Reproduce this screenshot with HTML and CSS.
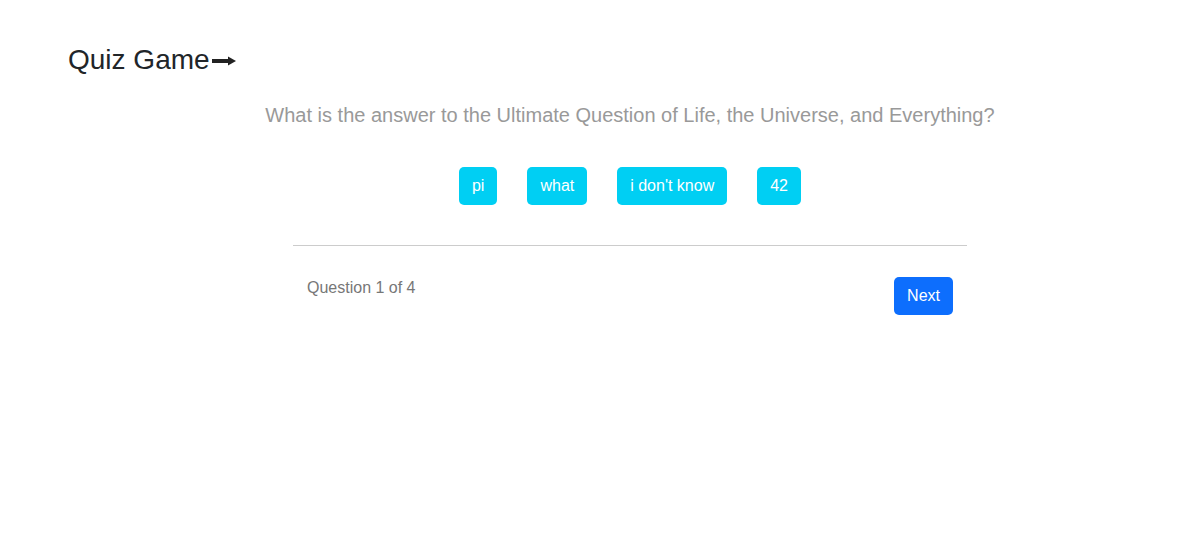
FILE: index.html
```html
<!DOCTYPE html>
<html lang="en">
<head>
<meta charset="utf-8">
<title>Quiz Game</title>
<link rel="stylesheet" href="styles.css">
</head>
<body>
<div class="page">
  <h1 class="title">Quiz Game<svg class="arrow" width="24" height="10" viewBox="0 0 24 10"><rect x="0" y="3" width="17" height="4" fill="#222"/><path d="M16 0.5 L24 5 L16 9.5 Z" fill="#222"/></svg></h1>
  <main class="quiz">
    <p class="question">What is the answer to the Ultimate Question of Life, the Universe, and Everything?</p>
    <div class="answers">
      <button class="answer">pi</button>
      <button class="answer">what</button>
      <button class="answer">i don't know</button>
      <button class="answer">42</button>
    </div>
    <div class="footer">
      <span class="progress">Question 1 of 4</span>
      <button class="next">Next</button>
    </div>
  </main>
</div>
</body>
</html>
```

FILE: styles.css
```css
html, body {
  margin: 0;
  padding: 0;
  background: #fff;
}
body {
  font-family: "Liberation Sans", Arial, sans-serif;
  color: #212529;
}
.page {
  padding: 44px 0 0 68px;
}
.title {
  margin: 0;
  font-size: 28px;
  font-weight: 400;
  line-height: 32px;
  display: flex;
  align-items: center;
  color: #212529;
}
.arrow {
  margin-left: 2px;
  margin-top: 1px;
}
.quiz {
  display: flex;
  flex-direction: column;
  align-items: center;
}
.question {
  margin: 27px 0 0;
  font-size: 20px;
  line-height: 24px;
  color: #999;
}
.answers {
  display: flex;
  gap: 30px;
  margin-top: 40px;
}
.answer {
  font-family: inherit;
  font-size: 16px;
  height: 38px;
  padding: 0 13px;
  border: none;
  border-radius: 5px;
  background: #00cff3;
  color: #fff;
}
.footer {
  width: 674px;
  box-sizing: border-box;
  margin-top: 40px;
  border-top: 1px solid #ccc;
  padding: 31px 14px 0;
  display: flex;
  justify-content: space-between;
  align-items: flex-start;
}
.progress {
  font-size: 16px;
  line-height: 20px;
  color: #777;
  margin-top: 1px;
}
.next {
  font-family: inherit;
  font-size: 16px;
  height: 38px;
  padding: 0 13px;
  border: none;
  border-radius: 5px;
  background: #0d6efd;
  color: #fff;
}
```
